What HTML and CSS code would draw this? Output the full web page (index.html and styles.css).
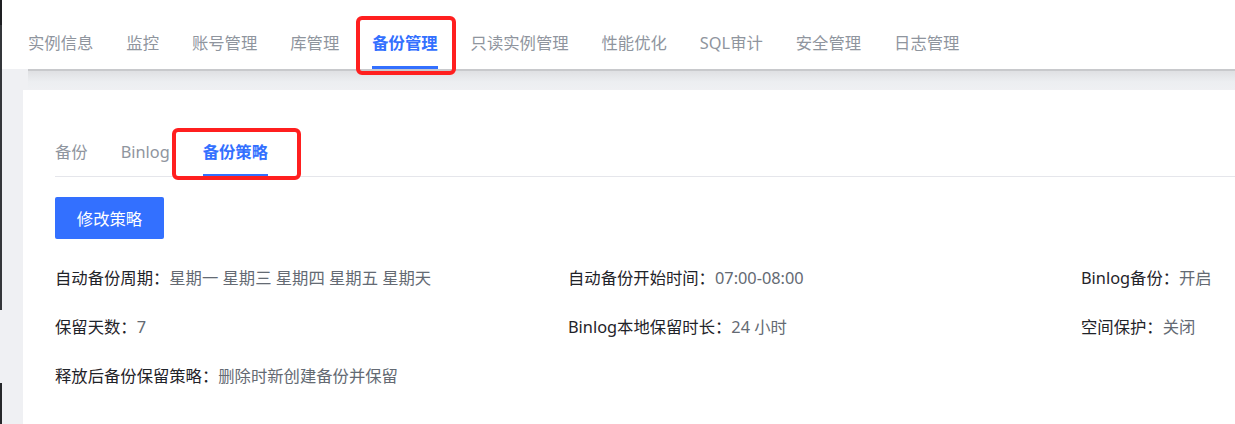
FILE: index.html
```html
<!DOCTYPE html>
<html lang="zh-CN">
<head>
<meta charset="utf-8">
<title>备份策略</title>
<link rel="stylesheet" href="styles.css">
</head>
<body>
<div class="page">
  <nav class="topnav">
    <a class="nav-item">实例信息</a>
    <a class="nav-item">监控</a>
    <a class="nav-item">账号管理</a>
    <a class="nav-item">库管理</a>
    <a class="nav-item active">备份管理<span class="mark mark-nav"></span></a>
    <a class="nav-item">只读实例管理</a>
    <a class="nav-item">性能优化</a>
    <a class="nav-item">SQL审计</a>
    <a class="nav-item">安全管理</a>
    <a class="nav-item">日志管理</a>
  </nav>
  <div class="shade"></div>
  <section class="card">
    <div class="tabs">
      <a class="tab">备份</a>
      <a class="tab">Binlog</a>
      <a class="tab active">备份策略<span class="mark mark-tab"></span></a>
    </div>
    <button class="btn-primary">修改策略</button>
    <div class="info-grid">
      <div class="info"><span class="label">自动备份周期：</span><span class="value">星期一 星期三 星期四 星期五 星期天</span></div>
      <div class="info"><span class="label">自动备份开始时间：</span><span class="value">07:00-08:00</span></div>
      <div class="info"><span class="label">Binlog备份：</span><span class="value">开启</span></div>
      <div class="info"><span class="label">保留天数：</span><span class="value">7</span></div>
      <div class="info"><span class="label">Binlog本地保留时长：</span><span class="value">24 小时</span></div>
      <div class="info"><span class="label">空间保护：</span><span class="value">关闭</span></div>
      <div class="info"><span class="label">释放后备份保留策略：</span><span class="value">删除时新创建备份并保留</span></div>
    </div>
  </section>
</div>
</body>
</html>
```

FILE: styles.css
```css
* { box-sizing: border-box; }

html, body {
  margin: 0;
  height: 100%;
  overflow: hidden;
}

body {
  position: relative;
  font-family: "Noto Sans", "Noto Sans CJK SC", sans-serif;
  font-size: 16.33px;
  background: #eff0f3;
}

body::before {
  content: "";
  position: absolute;
  left: 0;
  top: 0;
  width: 2px;
  height: 100%;
  z-index: 5;
  background: linear-gradient(#1e1f22 0 25px, #34363a 25px 310px, transparent 310px 383px, #26272a 383px);
}

.page {
  width: 1700px;
  min-height: 100%;
}

.topnav {
  display: flex;
  gap: 33px;
  height: 69px;
  padding-left: 28px;
  background: #ffffff;
}

.nav-item {
  position: relative;
  padding-top: 31px;
  padding-bottom: 11px;
  line-height: 24px;
  height: 69px;
  color: #8f959e;
  border-bottom: 3px solid transparent;
  white-space: nowrap;
  cursor: pointer;
}

.nav-item.active {
  color: #3370ff;
  font-weight: 700;
  border-bottom-color: #3370ff;
}

.shade {
  height: 21px;
  margin-left: 28px;
  background: linear-gradient(#c8c9cc 0 2px, #dfe0e3 2px, #eceef1 60%, #eff0f3 100%);
}

.card {
  margin-left: 23px;
  background: #ffffff;
  padding: 50px 0 60px 32px;
  min-height: 400px;
}

.tabs {
  display: flex;
  gap: 33px;
  border-bottom: 1px solid #e5e6eb;
}

.tab {
  position: relative;
  line-height: 24px;
  padding-bottom: 10px;
  margin-bottom: -1px;
  border-bottom: 3px solid transparent;
  color: #8f959e;
  cursor: pointer;
}

.tab.active {
  color: #3370ff;
  font-weight: 700;
  border-bottom-color: #3370ff;
}

.mark {
  position: absolute;
  border: 4px solid #ff1f1f;
  border-radius: 6px;
  z-index: 3;
  pointer-events: none;
}

.mark-nav {
  left: -16px;
  right: -18px;
  top: 16px;
  bottom: -9px;
}

.mark-tab {
  left: -31px;
  right: -33px;
  top: -12px;
  bottom: -6px;
}

.btn-primary {
  display: block;
  margin-top: 20px;
  width: 109px;
  height: 42px;
  border: none;
  border-radius: 2px;
  background: #3370ff;
  color: #ffffff;
  font-family: inherit;
  font-size: 16.33px;
  cursor: pointer;
}

.info-grid {
  display: grid;
  grid-template-columns: 513px 513px 513px;
  row-gap: 25px;
  margin-top: 27px;
}

.info {
  line-height: 24px;
  white-space: nowrap;
}

.label {
  color: #1f2329;
}

.value {
  color: #646a73;
}
```
